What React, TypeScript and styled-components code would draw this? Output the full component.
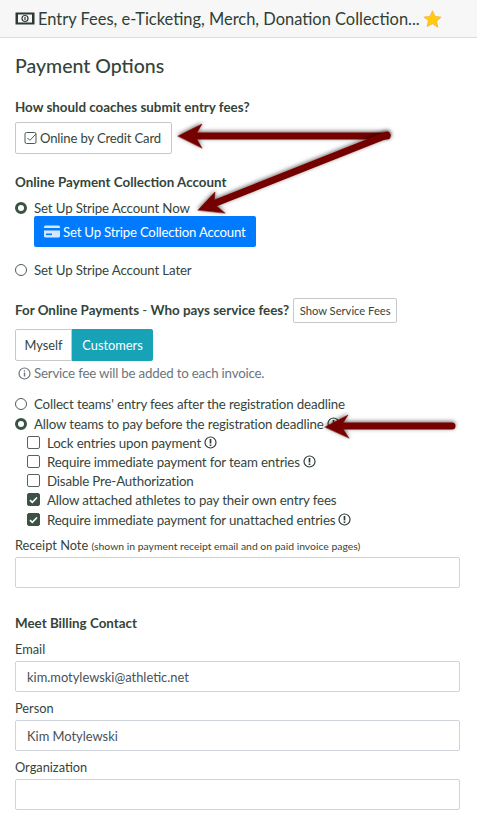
import React from 'react'
import styled, { createGlobalStyle } from 'styled-components'

const Global = createGlobalStyle`
  * { box-sizing: border-box; }
  html, body { margin: 0; padding: 0; background: #fff; }
  body {
    font-family: Lato, "Noto Sans", sans-serif;
    font-size: 13.3px;
    color: #35453c;
    overflow: hidden;
  }
`

const Page = styled.div`
  position: relative;
  width: 477px;
  height: 820px;
  overflow: hidden;
`

const Header = styled.div`
  height: 38px;
  display: flex;
  align-items: center;
  gap: 3px;
  padding: 0 15px;
  background: #f7f7f7;
  border-bottom: 1px solid #dcdcdc;
  font-size: 16.45px;
  color: #2f3e36;
  white-space: nowrap;
`

const Content = styled.div`
  padding: 0 17px 0 15px;
`

const Title = styled.h4`
  margin: 16px 0 0;
  height: 24px;
  line-height: 24px;
  font-size: 19.5px;
  font-weight: 500;
  color: #34443b;
`

const Label = styled.div<{ $top: number }>`
  margin-top: ${p => p.$top}px;
  height: 18px;
  line-height: 18px;
  font-size: 13.4px;
  font-weight: 700;
  color: #34443b;
  white-space: nowrap;
`

const LabelDash = styled.span`
  font-weight: 400;
`

const OutlineButton = styled.div`
  display: inline-flex;
  align-items: center;
  gap: 2px;
  margin-top: 6px;
  height: 32px;
  width: 157px;
  padding-left: 8px;
  background: #fff;
  border: 1px solid #c8c8c8;
  border-radius: 2px;
  font-size: 13.1px;
  letter-spacing: -0.15px;
  white-space: nowrap;
`

const OptionRow = styled.div<{ $top?: number; $indent?: number }>`
  display: flex;
  align-items: center;
  gap: 7px;
  margin-top: ${p => p.$top ?? 0}px;
  margin-left: ${p => p.$indent ?? 0}px;
  height: 19px;
  font-size: 13.3px;
  letter-spacing: -0.15px;
  white-space: nowrap;
`

const OptionText = styled.span`
  display: flex;
  align-items: center;
  gap: 3px;
`

const Radio = styled.span<{ $on?: boolean }>`
  flex: none;
  width: 12px;
  height: 12px;
  border-radius: 50%;
  background: #fff;
  border: ${p => (p.$on ? '3.5px solid #3c5245' : '1px solid #4f5f56')};
`

const Check = styled.span<{ $on?: boolean }>`
  flex: none;
  display: flex;
  align-items: center;
  justify-content: center;
  width: 13px;
  height: 13px;
  border-radius: 2px;
  background: ${p => (p.$on ? '#3c5245' : '#fff')};
  border: 1px solid ${p => (p.$on ? '#3c5245' : '#56655c')};
`

const PrimaryButton = styled.div`
  display: flex;
  align-items: center;
  gap: 3px;
  margin: -1px 0 0 19px;
  width: 222px;
  height: 31px;
  padding-left: 10px;
  background: #007bff;
  border-radius: 2px;
  color: #fff;
  font-size: 13.2px;
  letter-spacing: -0.2px;
  white-space: nowrap;
`

const FeesRow = styled.div`
  display: flex;
  align-items: center;
  gap: 4px;
  margin-top: 18px;
  height: 26px;
`

const SmallButton = styled.div`
  display: flex;
  align-items: center;
  justify-content: center;
  width: 104px;
  height: 25px;
  background: #fff;
  border: 1px solid #c8c8c8;
  border-radius: 2px;
  font-size: 11.2px;
  white-space: nowrap;
`

const Toggle = styled.div`
  display: flex;
  margin-top: 6px;
  width: 138px;
  height: 32px;
`

const ToggleItem = styled.div<{ $on?: boolean }>`
  display: flex;
  align-items: center;
  justify-content: center;
  width: ${p => (p.$on ? 81 : 57)}px;
  font-size: 12.8px;
  color: ${p => (p.$on ? '#fff' : '#35453c')};
  background: ${p => (p.$on ? '#17a2b8' : '#fff')};
  border: ${p => (p.$on ? 'none' : '1px solid #c8c8c8')};
  border-radius: ${p => (p.$on ? '0 2px 2px 0' : '2px 0 0 2px')};
`

const Hint = styled.div`
  display: flex;
  align-items: center;
  gap: 3px;
  margin: 3px 0 0 3px;
  height: 18px;
  font-size: 13.3px;
  letter-spacing: -0.2px;
  color: #6c757d;
  white-space: nowrap;
`

const FieldLabel = styled.div<{ $top: number }>`
  margin-top: ${p => p.$top}px;
  height: 18px;
  line-height: 18px;
  font-size: 12.8px;
  white-space: nowrap;
`

const Small = styled.span`
  font-size: 10.4px;
`

const Input = styled.div`
  display: flex;
  align-items: center;
  margin-top: 3px;
  width: 445px;
  height: 31px;
  padding-left: 11px;
  background: #fff;
  border: 1px solid #ced4da;
  border-radius: 2px;
  font-size: 12.9px;
  color: #495057;
`

const ArrowLayer = styled.svg`
  position: absolute;
  left: 0;
  top: 0;
  pointer-events: none;
`

const MoneyIcon = () => (
  <svg width="20" height="13" viewBox="0 0 20 13" style={{ flex: 'none' }}>
    <rect x="0.5" y="0.5" width="19" height="12" fill="#2c3a33" />
    <rect x="3" y="2.5" width="14" height="8" fill="#f7f7f7" />
    <circle cx="10" cy="6.5" r="3" fill="none" stroke="#2c3a33" strokeWidth="1.2" />
    <path d="M10 5v3" stroke="#2c3a33" strokeWidth="1.2" />
  </svg>
)

const Star = () => (
  <svg width="19" height="18" viewBox="0 0 24 23" style={{ flex: 'none' }}>
    <path d="M12 1l3.3 7.2 7.7.9-5.7 5.3 1.5 7.7L12 17.6l-6.8 3.5 1.5-7.7L1 9.1l7.7-.9z" fill="#ffcc12" stroke="#f5a623" strokeWidth="0.8" />
  </svg>
)

const CheckOutline = () => (
  <svg width="14" height="14" viewBox="0 0 14 14" style={{ flex: 'none' }}>
    <rect x="1" y="1.5" width="11" height="11" rx="1.5" fill="none" stroke="#4a5a51" />
    <path d="M3.5 7l2.4 2.4 6-6.4" fill="none" stroke="#4a5a51" />
  </svg>
)

const CardIcon = () => (
  <svg width="16" height="13" viewBox="0 0 16 13" style={{ flex: 'none' }}>
    <rect x="0" y="0.5" width="16" height="12" rx="1.5" fill="#d5e8ff" />
    <rect x="0" y="3" width="16" height="2.5" fill="#007bff" />
    <rect x="2" y="8.5" width="6" height="1.6" fill="#007bff" />
  </svg>
)

const InfoIcon = ({ alert }: { alert?: boolean }) => (
  <svg width="13" height="13" viewBox="0 0 13 13" style={{ flex: 'none' }}>
    <circle cx="6.5" cy="6.5" r="5.5" fill="none" stroke={alert ? '#2f3e36' : '#6c757d'} strokeWidth="1.2" />
    {alert ? (
      <path d="M6.5 3v4.4M6.5 8.6v1.5" stroke="#2f3e36" strokeWidth="1.7" />
    ) : (
      <path d="M6.5 5.6v4M6.5 3.2v1.4" stroke="#6c757d" strokeWidth="1.4" />
    )}
  </svg>
)

const Tick = () => (
  <svg width="9" height="8" viewBox="0 0 9 8">
    <path d="M1 4.2l2.3 2.2L8 1.5" fill="none" stroke="#fff" strokeWidth="1.6" />
  </svg>
)

const Arrows = () => (
  <ArrowLayer width="477" height="820" viewBox="0 0 477 820">
    <defs>
      <filter id="sh" x="-20%" y="-100%" width="140%" height="300%">
        <feDropShadow dx="0" dy="-1" stdDeviation="2" floodColor="#000" floodOpacity="0.6" />
      </filter>
    </defs>
    <g filter="url(#sh)" fill="#750000" stroke="#750000" strokeLinecap="round">
      <path d="M387 136L195 136" strokeWidth="7" fill="none" />
      <path d="M178 136L202 124L195 136L202 148Z" strokeWidth="0.5" />
    </g>
    <g filter="url(#sh)" fill="#750000" stroke="#750000" strokeLinecap="round">
      <path d="M387 135L213 204" strokeWidth="7" fill="none" />
      <path d="M198 210L215 192L214 204L225 213Z" strokeWidth="0.5" />
    </g>
    <g filter="url(#sh)" fill="#750000" stroke="#750000" strokeLinecap="round">
      <path d="M452 426L341 426" strokeWidth="7" fill="none" />
      <path d="M325 427L348 415L341 426L349 438Z" strokeWidth="0.5" />
    </g>
  </ArrowLayer>
)

export default function App() {
  return (
    <Page>
      <Global />
      <Header>
        <MoneyIcon />
        <span>Entry Fees, e-Ticketing, Merch, Donation Collection...</span>
        <Star />
      </Header>
      <Content>
        <Title>Payment Options</Title>
        <Label $top={20}>How should coaches submit entry fees?</Label>
        <OutlineButton>
          <CheckOutline />
          Online by Credit Card
        </OutlineButton>
        <Label $top={19}>Online Payment Collection Account</Label>
        <OptionRow $top={7}>
          <Radio $on />
          Set Up Stripe Account Now
        </OptionRow>
        <PrimaryButton>
          <CardIcon />
          Set Up Stripe Collection Account
        </PrimaryButton>
        <OptionRow $top={13}>
          <Radio />
          Set Up Stripe Account Later
        </OptionRow>
        <FeesRow>
          <Label $top={0}>
            For Online Payments <LabelDash>-</LabelDash> Who pays service fees?
          </Label>
          <SmallButton>Show Service Fees</SmallButton>
        </FeesRow>
        <Toggle>
          <ToggleItem>Myself</ToggleItem>
          <ToggleItem $on>Customers</ToggleItem>
        </Toggle>
        <Hint>
          <InfoIcon />
          Service fee will be added to each invoice.
        </Hint>
        <OptionRow $top={12}>
          <Radio />
          Collect teams' entry fees after the registration deadline
        </OptionRow>
        <OptionRow $top={1}>
          <Radio $on />
          <OptionText>
            Allow teams to pay before the registration deadline <InfoIcon alert />
          </OptionText>
        </OptionRow>
        <OptionRow $indent={12}>
          <Check />
          <OptionText>
            Lock entries upon payment <InfoIcon alert />
          </OptionText>
        </OptionRow>
        <OptionRow $indent={12}>
          <Check />
          <OptionText>
            Require immediate payment for team entries <InfoIcon alert />
          </OptionText>
        </OptionRow>
        <OptionRow $indent={12}>
          <Check />
          Disable Pre-Authorization
        </OptionRow>
        <OptionRow $indent={12}>
          <Check $on>
            <Tick />
          </Check>
          Allow attached athletes to pay their own entry fees
        </OptionRow>
        <OptionRow $indent={12} $top={1}>
          <Check $on>
            <Tick />
          </Check>
          <OptionText>
            Require immediate payment for unattached entries <InfoIcon alert />
          </OptionText>
        </OptionRow>
        <FieldLabel $top={7}>
          Receipt Note <Small>(shown in payment receipt email and on paid invoice pages)</Small>
        </FieldLabel>
        <Input />
        <Label $top={26}>Meet Billing Contact</Label>
        <FieldLabel $top={8}>Email</FieldLabel>
        <Input>kim.motylewski@athletic.net</Input>
        <FieldLabel $top={7}>Person</FieldLabel>
        <Input>Kim Motylewski</Input>
        <FieldLabel $top={7}>Organization</FieldLabel>
        <Input />
      </Content>
      <Arrows />
    </Page>
  )
}
